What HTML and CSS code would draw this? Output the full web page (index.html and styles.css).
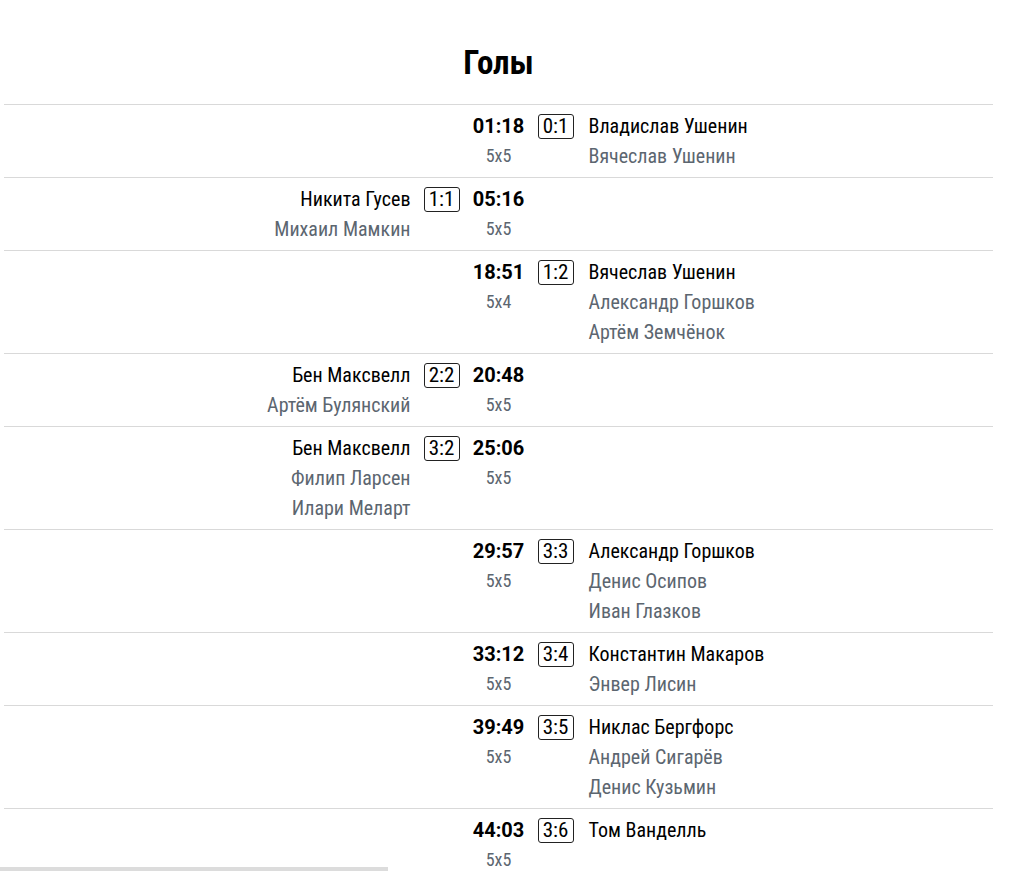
FILE: index.html
```html
<!DOCTYPE html>
<html lang="ru">
<head>
<meta charset="utf-8">
<title>Голы</title>
<link rel="stylesheet" href="styles.css">
</head>
<body>
<div class="page">
  <h2 class="title">Голы</h2>
  <div class="goals">
    <div class="goal">
      <div class="side left"></div>
      <div class="score-cell"></div>
      <div class="time-cell"><div class="time">01:18</div><div class="str">5x5</div></div>
      <div class="score-cell"><span class="score">0:1</span></div>
      <div class="side right"><div class="scorer">Владислав Ушенин</div><div class="assist">Вячеслав Ушенин</div></div>
    </div>
    <div class="goal">
      <div class="side left"><div class="scorer">Никита Гусев</div><div class="assist">Михаил Мамкин</div></div>
      <div class="score-cell"><span class="score">1:1</span></div>
      <div class="time-cell"><div class="time">05:16</div><div class="str">5x5</div></div>
      <div class="score-cell"></div>
      <div class="side right"></div>
    </div>
    <div class="goal">
      <div class="side left"></div>
      <div class="score-cell"></div>
      <div class="time-cell"><div class="time">18:51</div><div class="str">5x4</div></div>
      <div class="score-cell"><span class="score">1:2</span></div>
      <div class="side right"><div class="scorer">Вячеслав Ушенин</div><div class="assist">Александр Горшков</div><div class="assist">Артём Земчёнок</div></div>
    </div>
    <div class="goal">
      <div class="side left"><div class="scorer">Бен Максвелл</div><div class="assist">Артём Булянский</div></div>
      <div class="score-cell"><span class="score">2:2</span></div>
      <div class="time-cell"><div class="time">20:48</div><div class="str">5x5</div></div>
      <div class="score-cell"></div>
      <div class="side right"></div>
    </div>
    <div class="goal">
      <div class="side left"><div class="scorer">Бен Максвелл</div><div class="assist">Филип Ларсен</div><div class="assist">Илари Меларт</div></div>
      <div class="score-cell"><span class="score">3:2</span></div>
      <div class="time-cell"><div class="time">25:06</div><div class="str">5x5</div></div>
      <div class="score-cell"></div>
      <div class="side right"></div>
    </div>
    <div class="goal">
      <div class="side left"></div>
      <div class="score-cell"></div>
      <div class="time-cell"><div class="time">29:57</div><div class="str">5x5</div></div>
      <div class="score-cell"><span class="score">3:3</span></div>
      <div class="side right"><div class="scorer">Александр Горшков</div><div class="assist">Денис Осипов</div><div class="assist">Иван Глазков</div></div>
    </div>
    <div class="goal">
      <div class="side left"></div>
      <div class="score-cell"></div>
      <div class="time-cell"><div class="time">33:12</div><div class="str">5x5</div></div>
      <div class="score-cell"><span class="score">3:4</span></div>
      <div class="side right"><div class="scorer">Константин Макаров</div><div class="assist">Энвер Лисин</div></div>
    </div>
    <div class="goal">
      <div class="side left"></div>
      <div class="score-cell"></div>
      <div class="time-cell"><div class="time">39:49</div><div class="str">5x5</div></div>
      <div class="score-cell"><span class="score">3:5</span></div>
      <div class="side right"><div class="scorer">Никлас Бергфорс</div><div class="assist">Андрей Сигарёв</div><div class="assist">Денис Кузьмин</div></div>
    </div>
    <div class="goal">
      <div class="side left"></div>
      <div class="score-cell"></div>
      <div class="time-cell"><div class="time">44:03</div><div class="str">5x5</div></div>
      <div class="score-cell"><span class="score">3:6</span></div>
      <div class="side right"><div class="scorer">Том Ванделль</div></div>
    </div>
  </div>
</div>
<div class="hscroll"></div>
</body>
</html>
```
FILE: styles.css
```css
html, body {
  margin: 0;
  padding: 0;
  background: #fff;
}
body {
  font-family: Roboto, "DejaVu Sans", sans-serif;
  font-stretch: 75%;
  color: #000;
  overflow: hidden;
}
.page {
  width: 989px;
  margin-left: 4px;
  padding-top: 40px;
}
.title {
  margin: 0 0 18px;
  text-align: center;
  font-size: 33px;
  font-weight: bold;
  line-height: 46px;
  color: #000;
}
.goals {
  border-top: 1px solid #d9d9d9;
}
.goal {
  display: grid;
  grid-template-columns: 1fr 36px 52px 36px 1fr;
  column-gap: 13px;
  padding: 6px 0;
  border-bottom: 1px solid #d9d9d9;
  font-size: 20px;
  line-height: 30px;
}
.side.left {
  text-align: right;
}
.side.right {
  padding-left: 2px;
}
.scorer {
  color: #000;
}
.assist {
  color: #5c6670;
}
.time-cell {
  text-align: center;
}
.time {
  font-weight: bold;
  font-stretch: 100%;
  font-size: 20px;
}
.str {
  color: #5c6670;
  font-size: 18px;
}
.score-cell {
  display: flex;
  justify-content: center;
  align-items: flex-start;
  padding-top: 3px;
}
.score {
  display: block;
  width: 34px;
  height: 23px;
  border: 1px solid #222;
  border-radius: 3px;
  text-align: center;
  line-height: 23px;
  font-size: 21px;
}
.hscroll {
  position: fixed;
  left: 0;
  bottom: 0;
  width: 388px;
  height: 4px;
  background: #dcdcdc;
}
```
